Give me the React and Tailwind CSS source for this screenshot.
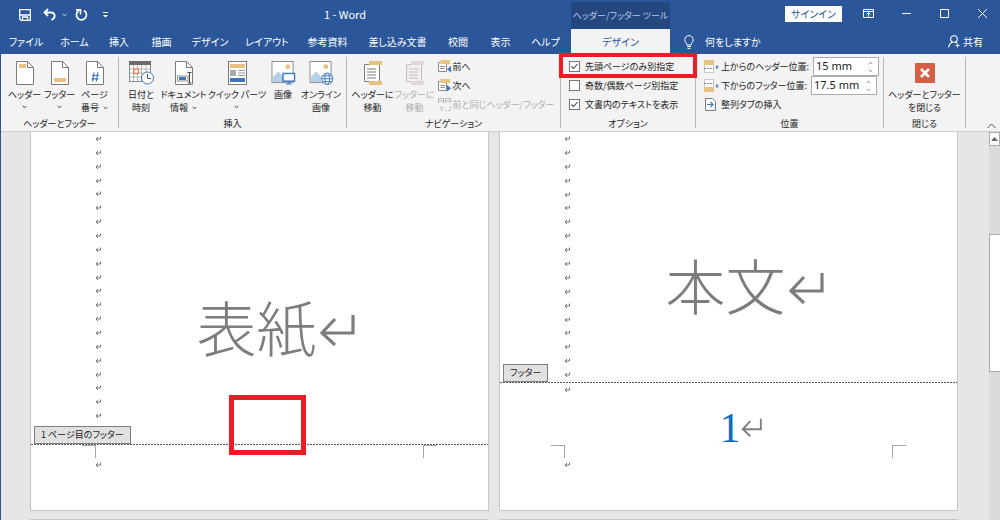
import React from "react";

const MENU_TABS = [
  { label: "ファイル", width: "w-[50px]" },
  { label: "ホーム", width: "w-[47px]" },
  { label: "挿入", width: "w-[42px]" },
  { label: "描画", width: "w-[43px]" },
  { label: "デザイン", width: "w-[54px]" },
  { label: "レイアウト", width: "w-[60px]" },
  { label: "参考資料", width: "w-[61px]" },
  { label: "差し込み文書", width: "w-[79px]" },
  { label: "校閲", width: "w-[42px]" },
  { label: "表示", width: "w-[43px]" },
  { label: "ヘルプ", width: "w-[47px]" },
];

function Chevron({ className = "" }) {
  return (
    <svg viewBox="0 0 7 5" className={`inline-block w-[5px] h-1 ${className}`} fill="none" stroke="currentColor" strokeWidth="1.2">
      <path d="M1 1l2.5 2.5L6 1" />
    </svg>
  );
}

/* ---------- ribbon icons ---------- */

function PageIcon({ children }) {
  return (
    <svg viewBox="0 0 18 24" className="w-[18px] h-6">
      <path d="M.5.5h11l6 6v17H.5z" fill="#fff" stroke="#7b7b7b" />
      <path d="M11.5.5v6h6" fill="none" stroke="#7b7b7b" />
      {children}
    </svg>
  );
}

function HeaderIcon() {
  return (
    <PageIcon>
      <rect x="3" y="3" width="7" height="4" fill="#e8c27f" />
    </PageIcon>
  );
}

function FooterIcon() {
  return (
    <PageIcon>
      <rect x="3" y="17" width="12" height="4" fill="#e8c27f" />
    </PageIcon>
  );
}

function PageNumberIcon() {
  return (
    <PageIcon>
      <path d="M8 11.500l-1.500 9M11.800 11.500l-1.500 9M6 14.500h7M5.500 17.800h7" fill="none" stroke="#3b78bd" strokeWidth="1.200" />
    </PageIcon>
  );
}

function DateTimeIcon() {
  return (
    <svg viewBox="0 0 25 24" className="w-[25px] h-6">
      <rect x=".5" y="1" width="21" height="19.500" fill="#fff" stroke="#8a8a8a" />
      <rect x="0" y="0" width="22" height="4" fill="#6b6b6b" />
      <path d="M4.500 4v16M8.500 4v16M12.500 4v16M17 4v16M1 8h20M1 12h20M1 16h20" stroke="#a5a5a5" strokeWidth=".8" />
      <rect x="5" y="8" width="4.500" height="4.500" fill="#fff" stroke="#e07a4a" strokeWidth="1.200" />
      <circle cx="18.500" cy="17" r="6" fill="#fff" stroke="#3b78bd" />
      <path d="M18.500 13v4.500h3.500" fill="none" stroke="#555" />
    </svg>
  );
}

function DocInfoIcon() {
  return (
    <PageIcon>
      <rect x="2.500" y="15" width="10.500" height="5" fill="#fff" stroke="#8a8a8a" />
      <rect x="4" y="16" width="7" height="3" fill="#3b78bd" />
      <path d="M12.500 11.500h4M12.500 22h4M14.500 11.500V22" stroke="#444" fill="none" />
    </PageIcon>
  );
}

function QuickPartsIcon() {
  return (
    <svg viewBox="0 0 19 24" className="w-[19px] h-6">
      <rect x=".5" y=".5" width="18" height="23" fill="#fff" stroke="#7b7b7b" />
      <rect x="2" y="3" width="15" height="4" fill="#e8c27f" />
      <rect x="2" y="9" width="6" height="6" fill="#aaa" />
      <path d="M10 9.500h7M10 12h7M10 14.500h7" stroke="#999" />
      <rect x="2" y="17" width="15" height="4" fill="#3b78bd" />
    </svg>
  );
}

function PictureIcon({ children }) {
  return (
    <svg viewBox="0 0 25 25" className="w-[25px] h-6">
      <rect x=".5" y=".5" width="22" height="22" fill="#fff" stroke="#8a8a8a" />
      <path d="M1 22v-5l6-6 5 5v6z" fill="#b8cfe8" />
      <circle cx="17" cy="6" r="2.500" fill="#e8c27f" />
      {children}
    </svg>
  );
}

function LocalPictureIcon() {
  return (
    <PictureIcon>
      <rect x="12" y="13" width="12" height="8" fill="#fff" stroke="#3b78bd" strokeWidth="1.500" />
      <path d="M18 21v2.500M15 24h6" stroke="#3b78bd" strokeWidth="1.200" />
    </PictureIcon>
  );
}

function OnlinePictureIcon() {
  return (
    <PictureIcon>
      <g fill="#fff" stroke="#3b78bd" strokeWidth="1">
        <circle cx="18.500" cy="18.500" r="5.800" />
        <ellipse cx="18.500" cy="18.500" rx="2.500" ry="5.800" />
        <path d="M12.700 18.500h11.600M13.500 15.500h10M13.500 21.500h10" />
      </g>
    </PictureIcon>
  );
}

function GoToIcon({ muted }) {
  const tan = muted ? "#e0d8db" : "#e8c27f";
  const line = muted ? "#c4bcc0" : "#7b7b7b";
  return (
    <svg viewBox="0 0 20 24" className="w-5 h-6">
      <path d="M1.500 3.500h15v17h-15z" fill={muted ? "#f3eff1" : "#fff"} stroke={line} />
      <path d="M4 8h9M4 11h9M4 14h9M4 17h9" stroke={line} />
      <rect x="6" y="0" width="13" height="4" fill={tan} />
      <rect x="6" y="20" width="13" height="4" fill={tan} />
    </svg>
  );
}

function StepIcon({ next }) {
  return (
    <svg viewBox="0 0 13 13" className="w-[13px] h-[13px] shrink-0">
      <path d="M2.500 2.500h-2v9h8v-9" fill="#fff" stroke="#8a8a8a" />
      <path d="M2.500 6.500H7M2.500 8.500h4" stroke="#8a8a8a" />
      <rect x="2.500" y="0" width="9.500" height="4" fill="#e8c27f" />
      <path d={next ? "M9 6v6.500l4-3.250z" : "M13 6v6.500L9 9.250z"} fill="#3b78bd" />
    </svg>
  );
}

function LinkPreviousIcon() {
  return (
    <svg viewBox="0 0 13 13" className="w-[13px] h-[13px] shrink-0" fill="none" stroke="#bdb6b9">
      <path d="M.5 5V.5h5V5M7.500 5V.5h5V5M.5 3h5M7.500 3h5" />
      <path d="M12.500 8v4.500h-5M4.500 12.500h-1v-4M1.500 10.500l2-2 2 2" strokeDasharray="3 1" />
    </svg>
  );
}

function EdgeIcon({ bottom }) {
  return (
    <svg viewBox="0 0 15 13" className="w-[15px] h-[13px] shrink-0">
      <rect x=".5" y=".5" width="9" height="12" fill="#fff" stroke="#c9c9c9" />
      <rect x="0" y={bottom ? 8 : 0} width="10" height="5" fill="#e8c27f" />
      <path d={bottom ? "M0 4.500h10" : "M0 8.500h10"} stroke="#8a8a8a" strokeDasharray="2 1" />
      <path d="M13 5v4M11.500 7h3" stroke="#3b78bd" />
    </svg>
  );
}

function AlignTabIcon() {
  return (
    <svg viewBox="0 0 15 13" className="w-[15px] h-[13px] shrink-0">
      <path d="M1.500.5h7l3 3v9h-10z" fill="#fff" stroke="#7b7b7b" />
      <path d="M3 6.500h6M6.500 4L9 6.500 6.500 9" fill="none" stroke="#3b78bd" strokeWidth="1.200" />
    </svg>
  );
}

function ReturnMark({ className = "" }) {
  return (
    <svg viewBox="0 0 36 32" className={className} fill="none" stroke="#7d7d7d" strokeWidth="3.200">
      <path d="M34 1v18H3M16 5L3 19l13 12" />
    </svg>
  );
}

function SmallMark() {
  return (
    <svg viewBox="0 0 6 6" className="w-[6px] h-[6px]" fill="none" stroke="#777" strokeWidth="1">
      <path d="M5.500.5v2.500H1M3 1L1 3l2 2" />
    </svg>
  );
}

/* ---------- ribbon ---------- */

function BigButton({ icon, lines, width, arrow, disabled }) {
  return (
    <button
      disabled={disabled}
      className={`flex flex-col items-center shrink-0 pt-1 ${width} ${disabled ? "text-[#b1abae]" : ""}`}
    >
      {icon}
      <span className="mt-[3px] text-center whitespace-nowrap leading-[13px]">
        {lines[0]}
        <br />
        {lines[1]}
        {arrow && <Chevron className={lines[1] ? "ml-1 mb-0.5" : "mb-1"} />}
      </span>
    </button>
  );
}

function Group({ title, width, children }) {
  return (
    <section className={`flex flex-col shrink-0 ${width}`}>
      <div className="flex justify-center h-[57px]">{children}</div>
      <h2 className="text-center leading-[20px]">{title}</h2>
    </section>
  );
}

function Separator() {
  return <div className="w-px h-[71px] shrink-0 bg-[#b5b5b5]" />;
}

function Option({ id, label, checked }) {
  return (
    <div className="flex items-center gap-[5px] h-[19px]">
      <span className="grid shrink-0">
        <input
          id={id}
          type="checkbox"
          defaultChecked={checked}
          className="peer col-start-1 row-start-1 appearance-none w-[11px] h-[11px] bg-white border border-[#767676]"
        />
        <svg
          viewBox="0 0 11 11"
          className="invisible peer-checked:visible col-start-1 row-start-1 w-[11px] h-[11px] pointer-events-none"
          fill="none"
          stroke="#444"
          strokeWidth="1.100"
        >
          <path d="M2.500 5.500l2 2 4-4.500" />
        </svg>
      </span>
      <label htmlFor={id} className="whitespace-nowrap">{label}</label>
    </div>
  );
}

function Distance({ id, icon, label, value }) {
  return (
    <div className="flex items-center h-[19px]">
      {icon}
      <label htmlFor={id} className="ml-0.5 mr-1 whitespace-nowrap">{label}</label>
      <div className="flex items-center shrink-0 w-[66px] h-[19px] bg-white border border-[#ababab]">
        <input id={id} defaultValue={value} className="w-[54px] pl-0.5 text-[11px] font-['Noto_Sans'] outline-none" />
        <div className="flex flex-col gap-1 text-[#777]">
          <Chevron className="rotate-180" />
          <Chevron />
        </div>
      </div>
    </div>
  );
}

function Ribbon() {
  return (
    <div className="flex h-[78px] pt-[3px] bg-[#f3f3f3] border-b border-[#cfcfcf] text-[9px] text-[#222]">
      <Group title="ヘッダーとフッター" width="w-[117px]">
        <BigButton icon={<HeaderIcon />} lines={["ヘッダー", ""]} width="w-[35px]" arrow />
        <BigButton icon={<FooterIcon />} lines={["フッター", ""]} width="w-[35px]" arrow />
        <BigButton icon={<PageNumberIcon />} lines={["ページ", "番号"]} width="w-[35px]" arrow />
      </Group>
      <Separator />
      <Group title="挿入" width="w-[227px]">
        <BigButton icon={<DateTimeIcon />} lines={["日付と", "時刻"]} width="w-[37px]" />
        <BigButton icon={<DocInfoIcon />} lines={["ドキュメント", "情報"]} width="w-[48px]" arrow />
        <BigButton icon={<QuickPartsIcon />} lines={["クイック パーツ", ""]} width="w-[59px]" arrow />
        <BigButton icon={<LocalPictureIcon />} lines={["画像", ""]} width="w-[33px]" />
        <BigButton icon={<OnlinePictureIcon />} lines={["オンライン", "画像"]} width="w-[43px]" />
      </Group>
      <Separator />
      <Group title="ナビゲーション" width="w-[213px]">
        <BigButton icon={<GoToIcon />} lines={["ヘッダーに", "移動"]} width="w-[42px]" />
        <BigButton icon={<GoToIcon muted />} lines={["フッターに", "移動"]} width="w-[42px]" disabled />
        <div className="flex flex-col w-[120px] pl-0.5 whitespace-nowrap">
          <button className="flex items-center gap-0.5 h-[19px]"><StepIcon />前へ</button>
          <button className="flex items-center gap-0.5 h-[19px]"><StepIcon next />次へ</button>
          <button disabled className="flex items-center gap-0.5 h-[19px] text-[#b1abae]">
            <LinkPreviousIcon />前と同じヘッダー/フッター
          </button>
        </div>
      </Group>
      <Separator />
      <Group title="オプション" width="w-[134px]">
        <div className="relative flex-1 pl-2">
          <Option id="first-page" label="先頭ページのみ別指定" checked />
          <Option id="odd-even" label="奇数/偶数ページ別指定" />
          <Option id="show-text" label="文書内のテキストを表示" checked />
          <div className="absolute -top-1 -left-0.5 -right-0.5 h-[25px] border-4 border-[#ed1c24] pointer-events-none" />
        </div>
      </Group>
      <Separator />
      <Group title="位置" width="w-[187px]">
        <div className="flex-1 pl-2">
          <Distance id="from-top" icon={<EdgeIcon />} label="上からのヘッダー位置:" value="15 mm" />
          <Distance id="from-bottom" icon={<EdgeIcon bottom />} label="下からのフッター位置:" value="17.5 mm" />
          <button className="flex items-center gap-0.5 h-[19px]"><AlignTabIcon />整列タブの挿入</button>
        </div>
      </Group>
      <Separator />
      <Group title="閉じる" width="w-[81px]">
        <BigButton
          width="w-[76px]"
          lines={["ヘッダーとフッター", "を閉じる"]}
          icon={
            <svg viewBox="0 0 20 24" className="w-5 h-6">
              <rect y="2" width="20" height="20" rx="1" fill="#d65f43" />
              <path d="M6 8l8 8M14 8l-8 8" stroke="#fff" strokeWidth="2.500" />
            </svg>
          }
        />
      </Group>
      <Separator />
      <button aria-label="リボンを折りたたむ" className="flex flex-1 items-end justify-end pr-1 pb-0.5">
        <svg viewBox="0 0 9 6" className="w-[9px] h-[6px]" fill="none" stroke="#555">
          <path d="M.5 5l4-4 4 4" />
        </svg>
      </button>
    </div>
  );
}

/* ---------- title bar and menu ---------- */

function TitleBar() {
  return (
    <div className="flex h-[29px] text-white">
      <div className="flex items-center w-[118px] pl-[18px] shrink-0">
        <button aria-label="上書き保存">
          <svg viewBox="0 0 12 12" className="w-3 h-3" fill="none" stroke="#fff" strokeWidth="1.300">
            <path d="M.7.7h10.600v10.600H2L.7 10zM1 6h10M3.500 11V8h5v3" />
          </svg>
        </button>
        <button aria-label="元に戻す" className="flex items-center ml-3 gap-1.5">
          <svg viewBox="0 0 13 13" className="w-[13px] h-[13px]" fill="none" stroke="#fff" strokeWidth="1.800">
            <path d="M5 1L1.500 4.500 5 8M2 4.500h6c4 0 4.500 4 2.500 6L8.500 12" />
          </svg>
          <Chevron />
        </button>
        <button aria-label="やり直し" className="ml-2">
          <svg viewBox="0 0 13 13" className="w-[13px] h-[13px]" fill="none" stroke="#fff" strokeWidth="1.700">
            <path d="M9 2.500a5 5 0 1 1-5.500.3M1 1.800h4.500V6.500" />
          </svg>
        </button>
        <button aria-label="クイック アクセス ツール バーのカスタマイズ" className="ml-[15px]">
          <svg viewBox="0 0 5 6" className="w-[5px] h-[6px]" fill="#fff">
            <path d="M0 0h5v1H0zM0 3h5L2.500 5.500z" />
          </svg>
        </button>
      </div>
      <h1 className="w-[452px] shrink-0 text-center text-[11px] leading-[29px]">1 - Word</h1>
      <div className="w-[99px] shrink-0 mt-0.5 bg-[#24477f] text-center text-[9px] leading-[27px] text-[#b8c9e4] whitespace-nowrap">
        ヘッダー/フッター ツール
      </div>
      <div className="flex flex-1 justify-end">
        <button className="w-[57px] h-4 mt-1.5 bg-white text-[#2b579a] leading-4">サインイン</button>
        <div className="flex gap-[27px] items-center h-[27px] ml-[21px] mr-3">
          <svg viewBox="0 0 11 11" className="w-[11px] h-[11px]" fill="none" stroke="#fff">
            <path d="M.5 1.500h10v8H.5zM.5 3.500h10M5.500 9V5M3.500 6.500l2-2 2 2" />
          </svg>
          <svg viewBox="0 0 11 11" className="w-[11px] h-[11px]" stroke="#fff"><path d="M1 5.500h9" /></svg>
          <svg viewBox="0 0 11 11" className="w-[11px] h-[11px]" fill="none" stroke="#fff"><path d="M1.500 1.500h8v8h-8z" /></svg>
          <svg viewBox="0 0 11 11" className="w-[11px] h-[11px]" stroke="#fff"><path d="M1 1l9 9M10 1l-9 9" /></svg>
        </div>
      </div>
    </div>
  );
}

function MenuBar() {
  return (
    <nav className="flex h-[25px] text-white leading-[25px] whitespace-nowrap">
      {MENU_TABS.map((tab) => (
        <button key={tab.label} className={`flex justify-center shrink-0 ${tab.width}`}>
          {tab.label}
        </button>
      ))}
      <button className="w-[99px] ml-0.5 shrink-0 bg-[#f3f3f3] text-[#2b579a]">デザイン</button>
      <button className="flex items-center gap-[11px] ml-[14px]">
        <svg viewBox="0 0 10 14" className="w-2.5 h-[14px]" fill="none" stroke="#fff">
          <path d="M3 10C3 8 .8 7.500.8 4.800a4.200 4.200 0 0 1 8.400 0C9.200 7.500 7 8 7 10zM3 11.500h4M3.500 13.400h3" />
        </svg>
        何をしますか
      </button>
      <button className="flex items-center gap-[3px] ml-auto mr-[17px]">
        <svg viewBox="0 0 12 13" className="w-3 h-[13px]" fill="none" stroke="#fff" strokeWidth="1.100">
          <circle cx="6" cy="4" r="3.300" />
          <path d="M.7 12.500C.7 9.500 2.500 8 4.500 7M7.500 7l1.500 1M9.500 8.500v4M7.500 10.500h4" />
        </svg>
        共有
      </button>
    </nav>
  );
}

/* ---------- document ---------- */

function Page({ title, titleTop, marks, body, footerLabel, children, overlay }) {
  return (
    <article className="relative flex-1 h-[379px] bg-white border-x border-b border-[#c6c6c6]">
      <div className={`flex ${body}`}>
        <div className={`flex flex-col w-[74px] pl-16 shrink-0 ${marks.height}`}>
          {Array.from({ length: marks.count }, (_, i) => (
            <div key={i} className="flex flex-1 items-center"><SmallMark /></div>
          ))}
        </div>
        <div className={`flex flex-1 items-start justify-center pl-8 pr-[74px] text-[60px] leading-[60px] font-light text-[#7d7d7d] whitespace-nowrap ${titleTop}`}>
          <p>{title}</p>
          <ReturnMark className="w-9 h-8 mt-[18px] ml-0.5 shrink-0" />
        </div>
      </div>
      <footer className="relative">
        <span className="absolute bottom-full left-[3px] h-[18px] px-1.5 bg-[#e1e1e1] border border-[#7f7f7f] text-[9px] leading-4 text-[#222] whitespace-nowrap">
          {footerLabel}
        </span>
        <div className="h-px bg-[repeating-linear-gradient(90deg,#555_0_2px,transparent_2px_3px)]" />
        {children}
        <div className="flex justify-between px-[51px]">
          <div className="w-[14px] h-[13px] border-t border-r border-[#a5a5a5]" />
          <div className="w-[14px] h-[13px] border-t border-l border-[#a5a5a5]" />
        </div>
        <div className="pl-16 pt-1"><SmallMark /></div>
      </footer>
      {overlay}
    </article>
  );
}

function Workspace() {
  return (
    <div className="flex flex-1 min-h-0 bg-[#e6e6e6]">
      <main className="flex-1 pl-[29px] pr-[31px] overflow-hidden">
        <div className="flex gap-2.5">
          <Page
            title="表紙"
            titleTop="pt-[164px]"
            body="h-[312px]"
            marks={{ count: 21, height: "h-[291px]" }}
            footerLabel="1 ページ目のフッター"
            overlay={
              <div className="absolute left-[198px] top-[263px] w-[77px] h-[60px] border-[5px] border-[#ed1c24]" />
            }
          />
          <Page
            title="本文"
            titleTop="pt-[122px]"
            body="h-[250px]"
            marks={{ count: 18, height: "h-[250px]" }}
            footerLabel="フッター"
          >
            <div className="flex h-[62px]">
              <div className="w-[74px] pl-16 pt-1 shrink-0"><SmallMark /></div>
              <div className="flex flex-1 justify-center items-start pt-6 pl-6 pr-[74px]">
                <span className="font-['Liberation_Serif'] text-[42px] leading-[42px] text-[#0f6cbd]">1</span>
                <ReturnMark className="w-[21px] h-[19px] mt-[11px]" />
              </div>
            </div>
          </Page>
        </div>
        <div className="flex gap-2.5 mt-2">
          <div className="flex-1 h-4 bg-white border border-[#c6c6c6]" />
          <div className="flex-1 h-4 bg-white border border-[#c6c6c6]" />
        </div>
      </main>
      <div className="flex flex-col w-[11px] shrink-0 bg-[#dadada]">
        <div className="flex items-center justify-center h-[14px] bg-white border border-[#ababab]">
          <svg viewBox="0 0 7 4" className="w-[7px] h-1" fill="#666"><path d="M0 4l3.500-4L7 4z" /></svg>
        </div>
        <div className="mt-[88px] h-[138px] bg-white border border-r-0 border-[#ababab]" />
      </div>
    </div>
  );
}

export default function App() {
  return (
    <div className="flex flex-col h-screen overflow-hidden bg-[#2b579a] border-l border-[#2b579a] text-[10px] font-['Noto_Sans_CJK_JP',sans-serif] [font-feature-settings:'palt']">
      <TitleBar />
      <MenuBar />
      <Ribbon />
      <Workspace />
    </div>
  );
}
